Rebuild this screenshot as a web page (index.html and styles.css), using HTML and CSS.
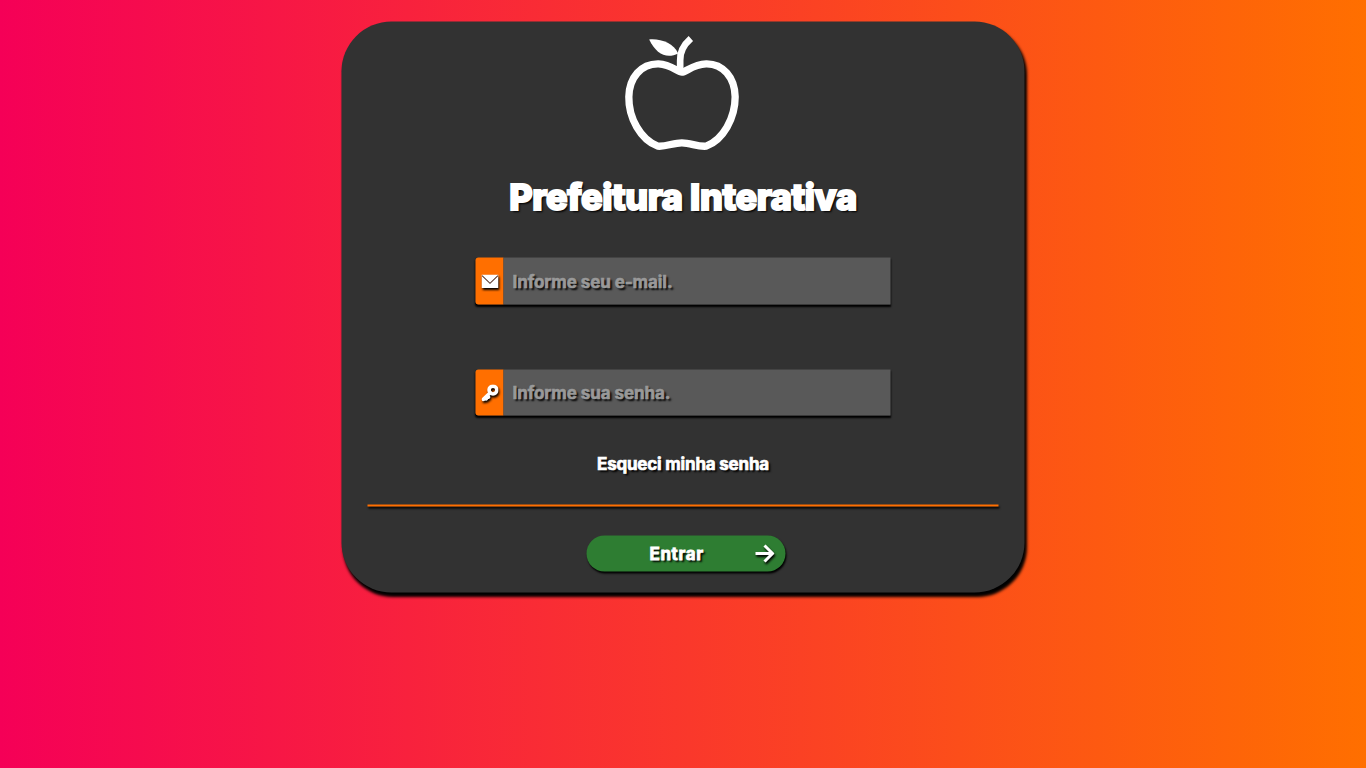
FILE: index.html
```html
<!DOCTYPE html>
<html lang="pt-BR">
<head>
<meta charset="utf-8">
<title>Prefeitura Interativa</title>
<link rel="stylesheet" href="styles.css">
</head>
<body>
<main class="card">
  <svg class="logo" viewBox="0 0 435 405" aria-hidden="true">
    <path class="outline" d="M217 140C204 140 185 116 147 115C95 114 59 156 58 214C57 278 94 343 145 362C171 364 191 352 217 352C244 352 263 364 290 362C341 343 377 278 377 214C376 156 340 114 290 115C250 116 230 140 217 140Z"/>
    <path class="outline stem" d="M212 138V105C211 83 219 61 244 39"/>
    <path fill="#fff" d="M119 42C154 39 192 53 206 84C171 101 140 86 119 42Z"/>
  </svg>
  <h1 class="title"><span>Prefeitura Interativa</span></h1>
  <form class="form">
    <label class="field">
      <span class="badge"><svg class="icon" viewBox="0 0 16 14"><path fill="#fff" d="M0 1H16V13.5H0Z"/><path class="fold" d="M.5 2L8 9.2L15.5 2"/></svg></span>
      <input class="input" type="email" placeholder="Informe seu e-mail.">
    </label>
    <label class="field password">
      <span class="badge"><svg class="icon key" viewBox="0 0 16 16"><circle class="ring" cx="10.8" cy="5.2" r="3.7"/><path class="shaft" d="M8.2 7.8L1.8 14M3.4 12.8L4.4 13.6M5.4 10.8L6.6 11.8"/></svg></span>
      <input class="input" type="password" placeholder="Informe sua senha.">
    </label>
    <a class="forgot">Esqueci minha senha</a>
    <hr class="rule">
    <button class="submit" type="button"><span class="submit-text">Entrar</span><svg class="arrow" viewBox="0 0 20 20"><path d="M1 10H18M10 2L18 10L10 18"/></svg></button>
  </form>
</main>
</body>
</html>
```
FILE: styles.css
```css
* { box-sizing: border-box; }
body {
  margin: 0;
  height: 768px;
  overflow: hidden;
  padding-top: 22px;
  background: linear-gradient(to right, #f50057, #ff6f00);
  font-family: Inter, "Noto Sans", sans-serif;
  color: #fff;
}
.card {
  width: 683px;
  height: 571px;
  margin: 0 0 0 342px;
  padding-top: 3.5px;
  border-radius: 50px;
  background: #323232;
  box-shadow: 2px 4px 3px #000;
  transform: translate(-.5px, -.5px);
  display: flex;
  flex-direction: column;
  align-items: center;
}
.logo { width: 145px; height: 135px; flex: none; margin-right: 2px; }
.outline { fill: none; stroke: #fff; stroke-width: 22; stroke-linejoin: round; }
.stem { stroke-width: 20; }
.title {
  margin: 12.5px 0 0;
  height: 48px;
  line-height: 48px;
  font-size: 36px;
  font-weight: 800;
  letter-spacing: -.4px;
  white-space: nowrap;
  -webkit-text-stroke: 2px #fff;
  text-shadow: 2px 2px 2px #000;
}
.form { width: 631px; display: flex; flex-direction: column; align-items: center; }
.field {
  display: flex;
  width: 415px;
  height: 47px;
  margin-top: 37px;
  box-shadow: 0 2px 2px #000;
  border-radius: 3px 0 0 3px;
}
.password { margin-top: 65px; height: 46px; }
.badge {
  width: 28px;
  display: flex;
  align-items: center;
  justify-content: center;
  background: #ff6f00;
  border-radius: 3px 0 0 3px;
}
.icon { width: 17px; height: 15px; filter: drop-shadow(1px 2px 1px #000); }
.key { height: 17px; }
.fold { fill: none; stroke: #593629; stroke-width: 1; }
.ring { fill: none; stroke: #fff; stroke-width: 3.4; }
.shaft { fill: none; stroke: #fff; stroke-width: 3.4; stroke-linecap: round; }
.input {
  flex: 1;
  min-width: 0;
  border: 0;
  padding: 1px 9px;
  background: #595959;
  font: 700 17px Inter, "Noto Sans", sans-serif;
  letter-spacing: -.08px;
  color: #fff;
  text-shadow: 2px 2px 2px #000;
}
.input::placeholder { color: #999; -webkit-text-stroke: .6px #999; }
.forgot {
  margin-top: 36px;
  height: 24px;
  line-height: 24px;
  font-size: 17px;
  font-weight: 700;
  letter-spacing: -.2px;
  -webkit-text-stroke: .7px #fff;
  text-shadow: 2px 2px 2px #000;
}
.rule {
  width: 631px;
  height: 2px;
  border: 0;
  margin: 29px 0 0;
  background: #ff6f00;
  box-shadow: 1px 2px 2px #000;
}
.submit {
  width: 199px;
  height: 36px;
  margin: 29px 0 0 6px;
  padding: 0 11px 0 63px;
  border: 0;
  border-radius: 18px;
  background: #2e7d32;
  box-shadow: 1px 2px 2px #000;
  color: #fff;
  display: flex;
  align-items: center;
  justify-content: space-between;
}
.submit-text {
  font: 700 17px Inter, "Noto Sans", sans-serif;
  letter-spacing: .6px;
  -webkit-text-stroke: .8px #fff;
  text-shadow: 2px 2px 2px #000;
}
.arrow { width: 20px; height: 20px; filter: drop-shadow(1px 2px 1px #000); }
.arrow path { fill: none; stroke: #fff; stroke-width: 3; }
```
